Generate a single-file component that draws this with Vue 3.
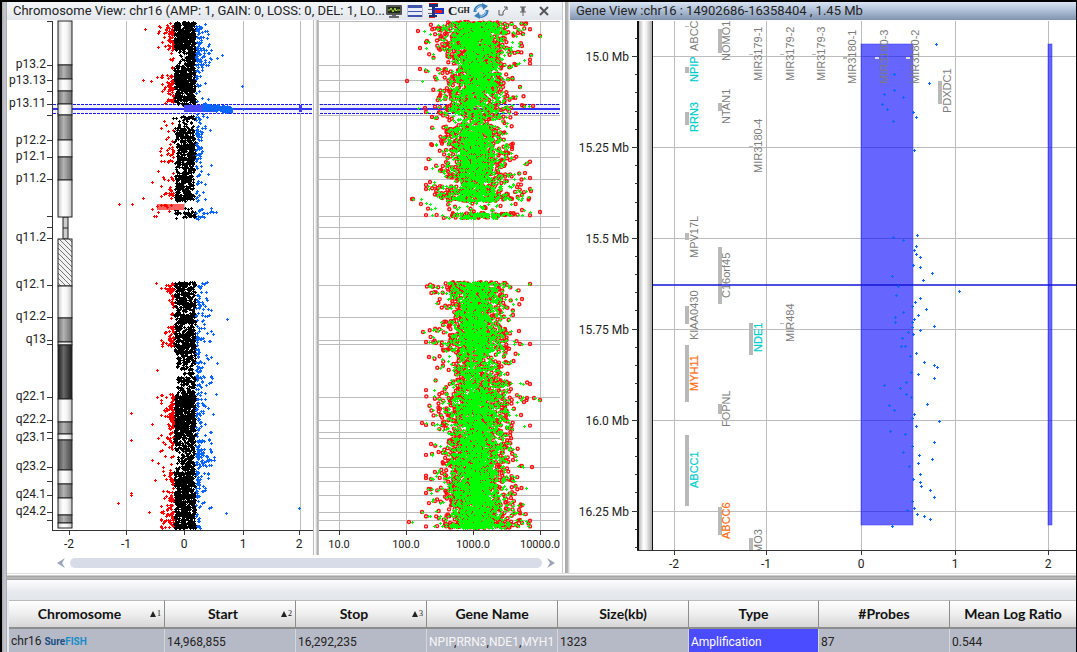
<script setup>
// Small seeded generator so the scatter looks the same on every load.
function seeded(seed) {
  let s = seed
  return () => {
    s = (s * 1664525 + 1013904223) % 4294967296
    return s / 4294967296
  }
}

const plus = (x, y) => {
  const a = Math.round(x)
  const b = Math.round(y)
  return `M${a - 1} ${b}h3v1h-3zM${a} ${b - 1}h1v3h-1z`
}
const ring = (x, y) =>
  `M${(x - 1.5).toFixed(1)} ${y.toFixed(1)}a1.5 1.5 0 1 0 3 0a1.5 1.5 0 1 0 -3 0`

/* ---- chromosome ideogram ---- */
const ticks = [21, 65, 80, 91, 104, 115, 140, 157, 179, 216, 227, 238, 285, 317, 340, 344, 397, 420, 432, 438, 467, 481, 495, 512, 520]
const bandLabels = [
  ['p13.2', 68], ['p13.13', 84], ['p13.11', 107], ['p12.2', 144], ['p12.1', 160], ['p11.2', 182],
  ['q11.2', 241], ['q12.1', 288], ['q12.2', 320], ['q13', 343], ['q22.1', 400], ['q22.2', 423],
  ['q23.1', 441], ['q23.2', 470], ['q24.1', 498], ['q24.2', 515]
]
const bands = [
  [21, 65, 'light'], [65, 79, 'mid'], [79, 91, 'light'], [91, 104, 'mid'], [104, 115, 'light'],
  [115, 140, 'mid'], [140, 157, 'light'], [157, 180, 'mid'], [180, 217, 'light'],
  [239, 286, 'hatch'], [286, 318, 'light'], [318, 342, 'mid'], [342, 345, 'light'],
  [345, 399, 'dark'], [399, 422, 'light'], [422, 434, 'mid'], [434, 440, 'light'],
  [440, 470, 'deep'], [470, 484, 'light'], [484, 498, 'mid'], [498, 515, 'light'],
  [515, 523, 'mid'], [523, 528, 'light']
]
const ratioAxis = [[69, '-2'], [126, '-1'], [184, '0'], [243, '1'], [299, '2']]

/* ---- log ratio scatter: y0, y1, x0, x1, points per square pixel ---- */
const r1 = seeded(16)
const blackZones = [
  [22, 50, 174, 195, 0.62], [50, 72, 176, 195, 0.18], [50, 66, 186, 195, 0.4], [68, 100, 174, 195, 0.56],
  [100, 105, 175, 195, 0.3], [116, 119, 181, 195, 0.5], [119, 127, 178, 195, 0.12], [127, 145, 174, 195, 0.33],
  [145, 160, 177, 195, 0.54], [160, 172, 175, 195, 0.28], [172, 190, 175, 194, 0.38], [190, 201, 174, 194, 0.45],
  [208, 218, 174, 196, 0.12], [213, 216, 184, 195, 0.4], [282, 290, 174, 195, 0.56], [290, 314, 175, 195, 0.34],
  [314, 323, 174, 195, 0.56], [323, 332, 175, 195, 0.28], [332, 352, 174, 195, 0.52], [352, 366, 177, 195, 0.29],
  [366, 386, 177, 195, 0.15], [376, 382, 177, 195, 0.15], [386, 396, 177, 195, 0.26], [395, 426, 174, 195, 0.64],
  [426, 445, 174, 195, 0.4], [445, 474, 181, 194, 0.4], [445, 474, 175, 181, 0.1], [472, 485, 174, 195, 0.5],
  [485, 515, 175, 195, 0.52], [515, 528, 174, 195, 0.38], [523, 528, 174, 195, 0.5]
]
let black = ''
for (const [y0, y1, x0, x1, d] of blackZones) {
  const n = (y1 - y0) * (x1 - x0) * d
  for (let i = 0; i < n; i++) black += plus(x0 + r1() * (x1 - x0), y0 + r1() * (y1 - y0))
}
black += plus(173, 118) + plus(176, 118) + plus(176, 218)

const tail = (zones, edge, dir) => {
  let d = ''
  for (const [y0, y1, count, spread] of zones) {
    for (let i = 0; i < count; i++) {
      const off = Math.min(-Math.log(1 - r1()) * spread, spread * 3)
      d += plus(edge + dir * off, y0 + r1() * (y1 - y0))
    }
  }
  return d
}
const list = (pts) => pts.map(([x, y]) => plus(x, y)).join('')
const red =
  tail([
    [22, 48, 46, 5], [48, 74, 10, 2], [74, 92, 38, 4], [92, 104, 14, 4], [118, 145, 10, 4],
    [145, 164, 20, 4], [170, 186, 9, 5], [186, 200, 18, 4], [203, 212, 10, 8], [282, 292, 22, 4],
    [292, 326, 18, 2], [326, 348, 42, 4], [394, 428, 66, 4], [428, 448, 24, 5], [448, 472, 10, 5],
    [472, 496, 26, 4], [496, 528, 66, 4]
  ], 173, -1) +
  list([[145, 29], [119, 204], [132, 204], [143, 198], [152, 182], [143, 80], [151, 81], [157, 77], [160, 151],
    [154, 216], [156, 216], [152, 209], [156, 283], [157, 370], [157, 397], [131, 413], [152, 424], [131, 440],
    [152, 460], [155, 480], [158, 463], [131, 493], [131, 495], [118, 503], [149, 512], [161, 519]])
const blue =
  tail([
    [22, 46, 30, 4], [46, 66, 56, 5], [66, 104, 24, 3], [113, 122, 10, 5], [122, 145, 28, 3],
    [145, 178, 30, 4], [178, 202, 16, 3], [208, 219, 18, 5], [282, 304, 24, 4], [304, 345, 46, 5],
    [345, 386, 54, 5], [386, 420, 40, 4], [420, 448, 26, 5], [448, 466, 60, 5], [466, 496, 40, 4],
    [496, 528, 18, 5]
  ], 196, 1) +
  list([[242, 86], [222, 55], [217, 58], [209, 44], [208, 99], [210, 130], [211, 165], [208, 174], [216, 212],
    [213, 212], [227, 319], [213, 334], [210, 341], [217, 363], [212, 378], [216, 394], [213, 414], [209, 440],
    [214, 457], [214, 460], [211, 507], [226, 513], [299, 508], [243, 109]])
let ampProbes = ''
for (let i = 0; i < 150; i++) {
  const x = 203 + Math.pow(r1(), 1.2) * 29
  ampProbes += plus(x, 107 + (x - 203) / 12 + (r1() - 0.5) * 6)
}

/* ---- signal intensity scatter ---- */
const r2 = seeded(99)
const gauss = () => Math.sqrt(-2 * Math.log(1 - r2())) * Math.cos(6.283 * r2())
const intensityAxis = [[339, '10.0'], [406, '100.0'], [473, '1000.0'], [540, '10000.0']]
const signalZones = [
  [22, 50, 360, 20], [50, 66, 140, 17], [66, 95, 280, 16], [95, 104, 60, 18], [104, 114, 75, 22],
  [114, 120, 26, 16], [119, 126, 18, 16], [126, 150, 230, 16], [150, 168, 160, 18], [168, 186, 140, 18],
  [186, 201, 160, 21], [203, 212, 12, 25], [213, 218, 55, 21], [282, 294, 120, 19], [294, 312, 140, 17],
  [312, 326, 120, 15], [326, 352, 280, 17], [352, 382, 160, 15], [382, 396, 90, 17], [394, 430, 360, 19],
  [430, 446, 150, 17], [446, 470, 240, 18], [470, 500, 340, 17], [500, 528, 310, 19], [523, 528, 50, 20]
]
let rings = ''
let greens = ''
const probe = (x, y, dx) => {
  rings += ring(x, y)
  greens += plus(x + dx, y)
}
for (const [y0, y1, n, sd] of signalZones) {
  for (let i = 0; i < n; i++) {
    const off = gauss() * sd
    const x = 476 + Math.max(-50, Math.min(54, off))
    probe(x, y0 + r2() * (y1 - y0), -gauss() * 3 - off * 0.08)
    if (i % 10 < 9) greens += plus(476 + gauss() * sd * 0.6, y0 + r2() * (y1 - y0))
  }
}
const signalOutliers = [
  [418, 31, 6], [420, 48, 6], [427, 41, -1], [420, 69, 5], [426, 71, 2], [407, 81, 15], [540, 36, 0], [531, 55, 0],
  [525, 24, 0], [523, 34, 0], [522, 46, -3], [518, 52, -1], [520, 87, 0], [516, 65, -4], [533, 106, -4],
  [524, 106, 0], [425, 108, -7], [432, 117, 4], [432, 145, 4], [430, 182, 4], [412, 199, 9], [421, 204, 9],
  [413, 199, 0], [525, 173, -6], [531, 191, -5], [530, 189, 1], [540, 212, -10], [522, 210, 2], [433, 286, -4],
  [522, 299, -6], [513, 315, -3], [423, 332, 1], [519, 331, -8], [520, 344, -6], [530, 344, -8], [436, 343, -3],
  [429, 357, 4], [506, 363, 0], [530, 384, -7], [534, 398, 1], [540, 400, -1], [527, 398, -5], [524, 402, -7],
  [422, 423, 4], [433, 424, 4], [521, 415, -5], [431, 444, 4], [513, 460, 3], [521, 466, 1], [532, 467, -9],
  [426, 478, 5], [431, 479, 2], [512, 478, -4], [422, 512, 0], [409, 522, 3], [435, 501, -3], [519, 510, -6],
  [520, 520, 1], [522, 523, 0], [518, 526, 0]
]
for (const [x, y, dx] of signalOutliers) probe(x, y, dx)

/* ---- gene view ---- */
const geneMajor = [[56, '15.0 Mb'], [147, '15.25 Mb'], [238, '15.5 Mb'], [329, '15.75 Mb'], [420, '16.0 Mb'], [511, '16.25 Mb']]
const geneMinor = [38, 74, 92, 111, 129, 165, 183, 202, 220, 256, 274, 292, 310, 347, 365, 383, 401, 438, 456, 474, 492, 529, 547]
const geneAxis = [[674, '-2'], [766, '-1'], [861, '0'], [955, '1'], [1048, '2']]
// name, label baseline x, label bottom y, bar x, bar top, bar height, tone
const genes = [
  ['ABCC', 698, 51, 685, 26, 1, ''], ['NPIP', 698, 82, 685, 67, 6, 'cyan'], ['RRN3', 698, 132, 685, 112, 13, 'cyan'],
  ['MPV17L', 698, 258, 685, 233, 7, ''], ['KIAA0430', 698, 340, 685, 306, 18, ''], ['MYH11', 698, 391, 685, 345, 57, 'orange'],
  ['ABCC1', 698, 488, 685, 435, 71, 'cyan'], ['NOMO1', 730, 61, 718, 29, 24, ''], ['NTAN1', 730, 124, 718, 103, 8, ''],
  ['C16orf45', 730, 298, 718, 247, 57, ''], ['FOPNL', 730, 427, 718, 404, 10, ''], ['ABCC6', 730, 539, 718, 507, 28, 'orange'],
  ['MIR3179-1', 762, 81, 749, 54, 1, ''], ['MIR3180-4', 762, 173, 749, 146, 1, ''], ['NDE1', 762, 352, 749, 323, 32, 'cyan'],
  ['MO3', 762, 553, 749, 538, 12, ''], ['MIR3179-2', 794, 81, 780, 54, 1, ''], ['MIR484', 794, 342, 780, 323, 1, ''],
  ['MIR3179-3', 825, 81, 812, 54, 1, ''], ['MIR3180-1', 856, 84, 843, 57, 2, ''], ['MIR3180-3', 888, 84, 875, 57, 2, 'over'],
  ['MIR3180-2', 919, 84, 906, 57, 2, ''], ['PDXDC1', 951, 113, 938, 81, 23, '']
]
const geneDots = list([
  [936, 44], [894, 74], [929, 83], [894, 90], [884, 94], [903, 97], [882, 104], [887, 109], [913, 112], [916, 117],
  [893, 121], [914, 150], [917, 235], [893, 237], [903, 240], [916, 246], [914, 250], [916, 254], [920, 257],
  [913, 265], [920, 267], [932, 273], [892, 276], [923, 280], [898, 286], [959, 291], [896, 295], [920, 298],
  [915, 302], [912, 306], [926, 309], [903, 312], [918, 315], [895, 317], [914, 319], [912, 322], [895, 322],
  [934, 326], [912, 327], [920, 330], [908, 332], [913, 334], [902, 338], [901, 346], [905, 346], [916, 353],
  [910, 356], [924, 362], [934, 365], [937, 367], [911, 372], [918, 374], [934, 378], [906, 382], [884, 385],
  [900, 388], [906, 394], [911, 397], [927, 404], [889, 405], [894, 410], [914, 414], [912, 418], [939, 421],
  [916, 426], [890, 431], [905, 434], [934, 442], [912, 446], [903, 452], [919, 455], [932, 459], [918, 463],
  [909, 466], [920, 474], [913, 479], [920, 482], [921, 486], [930, 490], [934, 497], [912, 501], [914, 508],
  [907, 510], [917, 514], [924, 516], [930, 519], [892, 526]
])

const columns = [
  { name: 'Chromosome', sort: '1', width: 156 }, { name: 'Start', sort: '2', width: 131 },
  { name: 'Stop', sort: '3', width: 131 }, { name: 'Gene Name', width: 131 },
  { name: 'Size(kb)', width: 131 }, { name: 'Type', width: 130 },
  { name: '#Probes', width: 131 }, { name: 'Mean Log Ratio', width: 127 }
]
</script>

<template>
  <main class="window">
    <div class="views">
      <section class="pane">
        <header class="bar">
          <h2>Chromosome View: chr16 (AMP: 1, GAIN: 0, LOSS: 0, DEL: 1, LO...</h2>
          <div class="tools">
            <button type="button" aria-label="Signal monitor">
              <svg viewBox="0 0 18 16" width="18" height="16">
                <rect x="1" y="2" width="16" height="10" rx="1" fill="#555" />
                <rect x="3" y="4" width="12" height="6" fill="#1d2b12" />
                <path d="M3 7h2l1-2 2 4 2-4 1 3 1-1h3" fill="none" stroke="#b7e04a" />
                <path d="M7 12h4v1h3v2H4v-2h3z" fill="#666" />
              </svg>
            </button>
            <button type="button" aria-label="Table layout">
              <svg viewBox="0 0 18 16" width="18" height="16">
                <rect x="1" y="2" width="16" height="12" fill="#e9edf8" />
                <path d="M1 2h16v3H1zM1 8h16v1H1zM1 12h16v2H1z" fill="#3f55ad" />
                <path d="M1 2h1v12H1zM16 2h1v12h-1z" fill="#b4bedd" />
              </svg>
            </button>
            <button type="button" aria-label="Interval bars">
              <svg viewBox="0 0 18 16" width="18" height="16">
                <path d="M2 0h9v1H2zM2 14h6v1H2z" fill="#e02020" />
                <path d="M2 1h9v3H2zM2 12h8v2H2z" fill="#1c2c78" />
                <path d="M1 6h5v1H1zM1 10h5v1H1z" fill="#667" />
                <rect x="5" y="4" width="3" height="8" fill="#20307c" />
                <rect x="7" y="5" width="10" height="6" fill="#1a35c8" />
                <path d="M8 7h7v3H8z" fill="#ee1616" />
              </svg>
            </button>
            <button type="button" class="cgh"><b>C</b>GH</button>
            <button type="button" aria-label="Refresh">
              <svg viewBox="0 0 16 16" width="16" height="16">
                <g fill="none" stroke="#3a7fb8" stroke-width="3">
                  <path d="M2 9A6 6 0 0 1 10 3" /><path d="M14 7A6 6 0 0 1 6 13" />
                </g>
                <path d="M9 0l6 3-5 4zM7 16l-6-3 5-4z" fill="#3a7fb8" />
                <path d="M3 8A5 5 0 0 1 9 3M13 8A5 5 0 0 1 7 13" fill="none" stroke="#a9d6f2" />
              </svg>
            </button>
            <button type="button" aria-label="Detach">
              <svg viewBox="0 0 12 16" width="12" height="16" fill="none" stroke="#555">
                <path d="M2 7v5h4v-3M6 9l4-5M7 4h3v3" />
              </svg>
            </button>
            <button type="button" aria-label="Pin">
              <svg viewBox="0 0 12 16" width="12" height="16" fill="none" stroke="#666">
                <path d="M3 4h6M3 9h6M6 9v4" /><path d="M6 4v5" stroke-width="3" />
              </svg>
            </button>
            <button type="button" aria-label="Close">
              <svg viewBox="0 0 14 16" width="14" height="16" fill="none" stroke="#555" stroke-width="2">
                <path d="M3 4l8 8M11 4l-8 8" />
              </svg>
            </button>
          </div>
        </header>

        <div class="plots">
          <svg class="plot" viewBox="7 20 307 535" role="img" aria-label="Chromosome 16 log ratios">
            <defs>
              <linearGradient id="light"><stop offset="0" stop-color="#c9c9c9" /><stop offset=".35" stop-color="#fff" /><stop offset=".65" stop-color="#f4f4f4" /><stop offset="1" stop-color="#c0c0c0" /></linearGradient>
              <linearGradient id="mid"><stop offset="0" stop-color="#6e6e6e" /><stop offset=".4" stop-color="#b4b4b4" /><stop offset="1" stop-color="#6a6a6a" /></linearGradient>
              <linearGradient id="deep"><stop offset="0" stop-color="#4d4d4d" /><stop offset=".4" stop-color="#8c8c8c" /><stop offset="1" stop-color="#484848" /></linearGradient>
              <linearGradient id="dark"><stop offset="0" stop-color="#1c1c1c" /><stop offset=".4" stop-color="#696969" /><stop offset="1" stop-color="#1a1a1a" /></linearGradient>
              <pattern id="hatch" width="5" height="5" patternUnits="userSpaceOnUse">
                <rect width="5" height="5" fill="#f2f2f2" /><path d="M-1 -1l7 7M-1 4l2 2M4 -1l2 2" stroke="#555" stroke-width=".8" />
              </pattern>
            </defs>
            <path class="grid" d="M126 21v509M184 21v509M243 21v509M300 21v509M313 20v535" />
            <rect x="53" y="104" width="259" height="9" fill="#f1f1ff" />
            <path class="select" d="M53 109H312" />
            <path class="edge" d="M53 104H312M53 113H312" />
            <path :d="black" fill="#000" />
            <rect x="157" y="204" width="27" height="6" fill="#ff6060" />
            <path :d="red" fill="#f00" />
            <path :d="blue" fill="#0a66ff" />
            <rect x="184" y="105" width="33" height="7" fill="#4a4aff" />
            <rect x="299" y="105" width="3" height="7" fill="#4040f0" />
            <path :d="ampProbes" fill="#0a66ff" />
            <rect x="63" y="217" width="5" height="22" fill="#ccc" stroke="#222" />
            <path d="M63 228h5" stroke="#222" />
            <rect v-for="b in bands" :key="b[0]" x="58" :y="b[0]" width="14" :height="b[1] - b[0]" :fill="`url(#${b[2]})`" stroke="#222" />
            <path class="axis" d="M52 21V530H313" />
            <path v-for="t in ticks" :key="t" class="axis" :d="`M47 ${t}h5`" />
            <text v-for="l in bandLabels" :key="l[0]" class="label" x="46" :y="l[1]" text-anchor="end">{{ l[0] }}</text>
            <g v-for="a in ratioAxis" :key="a[1]">
              <path class="axis" :d="`M${a[0]} 530v5`" />
              <text class="label" :x="a[0]" y="548" text-anchor="middle">{{ a[1] }}</text>
            </g>
          </svg>
          <div class="rail"></div>
          <svg class="plot" viewBox="319 20 243 535" role="img" aria-label="Signal intensities">
            <path class="grid" d="M339 21v509M406 21v509M473 21v509M540 21v509" />
            <path v-for="t in ticks" :key="t" class="grid" :d="`M319 ${t}h241`" />
            <rect x="320" y="105" width="240" height="8" fill="#eeeeff" />
            <path class="select" d="M320 109H560" />
            <path class="edge" d="M320 104H560M320 113H560" />
            <path :d="rings" fill="none" stroke="#ff1010" stroke-width="1.4" />
            <path :d="greens" fill="#0f0" />
            <path class="axis" d="M319 530H560" />
            <g v-for="a in intensityAxis" :key="a[1]">
              <path class="axis" :d="`M${a[0]} 530v5`" />
              <text class="label small" :x="a[0]" y="548" text-anchor="middle">{{ a[1] }}</text>
            </g>
          </svg>
        </div>

        <div class="scroll">
          <button type="button" aria-label="Scroll left"><svg viewBox="0 0 8 10" width="8" height="10"><path d="M8 0L0 5l8 5-3-5z" fill="#9aa4b6" /></svg></button>
          <div class="thumb"></div>
          <button type="button" aria-label="Scroll right"><svg viewBox="0 0 8 10" width="8" height="10"><path d="M0 0l8 5-8 5 3-5z" fill="#9aa4b6" /></svg></button>
        </div>
      </section>

      <div class="splitter"></div>

      <section class="pane">
        <header class="bar active">
          <h2>Gene View :chr16 : 14902686-16358404 , 1.45 Mb</h2>
        </header>
        <svg class="plot" viewBox="570 20 506 553" role="img" aria-label="Genes on chromosome 16">
          <defs>
            <linearGradient id="tube"><stop offset="0" stop-color="#aaa" /><stop offset=".4" stop-color="#fff" /><stop offset=".6" stop-color="#f0f0f0" /><stop offset="1" stop-color="#aaa" /></linearGradient>
            <clipPath id="area"><rect x="653" y="21" width="423" height="529" /></clipPath>
          </defs>
          <path v-for="a in geneAxis" :key="a[1]" class="grid" :d="`M${a[0]} 21v529`" />
          <path v-for="m in geneMajor" :key="m[0]" class="grid" :d="`M653 ${m[0]}h423`" />
          <g clip-path="url(#area)">
            <rect v-for="g in genes" :key="g[0]" :x="g[3]" :y="g[4]" width="4" :height="g[5]" fill="#b9b9b9" />
            <rect x="861" y="44" width="52" height="481" class="amp" />
            <rect x="1048" y="44" width="4" height="481" class="amp" />
            <rect x="875" y="57" width="4" height="2" fill="#deded0" />
            <rect x="906" y="57" width="4" height="2" fill="#deded0" />
            <text v-for="g in genes" :key="g[0]" :class="['gene', g[6]]" :transform="`translate(${g[1]} ${g[2]}) rotate(-90)`">{{ g[0] }}</text>
          </g>
          <path d="M653 285H1076" stroke="#1414d8" stroke-width="1.3" />
          <path :d="geneDots" fill="#0a66ff" />
          <rect x="638" y="21" width="14" height="529" fill="url(#tube)" />
          <rect x="637" y="21" width="2" height="529" fill="#111" />
          <rect x="652" y="21" width="1" height="529" fill="#111" />
          <path class="axis" d="M637 550H1076" />
          <path v-for="m in geneMinor" :key="m" class="axis" :d="`M635 ${m}h3`" />
          <g v-for="m in geneMajor" :key="m[1]">
            <path class="axis" :d="`M632 ${m[0]}h6`" />
            <text class="label" x="629" :y="m[0] + 5" text-anchor="end">{{ m[1] }}</text>
          </g>
          <g v-for="a in geneAxis" :key="a[1]">
            <path class="axis" :d="`M${a[0]} 550v5`" />
            <text class="label" :x="a[0]" y="568" text-anchor="middle">{{ a[1] }}</text>
          </g>
        </svg>
      </section>
    </div>

    <div class="divider"></div>
    <div class="strip"></div>
    <table>
      <colgroup><col v-for="c in columns" :key="c.name" :width="c.width" /></colgroup>
      <thead>
        <tr>
          <th v-for="c in columns" :key="c.name" scope="col">
            <div class="head">
              <span>{{ c.name }}</span>
              <small v-if="c.sort"><svg viewBox="0 0 6 6" width="6" height="6"><path d="M3 0l3 6H0z" fill="#222" /></svg>{{ c.sort }}</small>
            </div>
          </th>
        </tr>
      </thead>
      <tbody>
        <tr>
          <td>chr16 <a href="#" class="fish">Sure<span>FISH</span></a></td>
          <td>14,968,855</td>
          <td>16,292,235</td>
          <td><i>NPIP</i>,<i>RRN3</i>,<i>NDE1</i>,<i>MYH1</i></td>
          <td>1323</td>
          <td class="type">Amplification</td>
          <td>87</td>
          <td>0.544</td>
        </tr>
      </tbody>
    </table>
  </main>
</template>

<style>
html,
body {
  background: #000;
}
</style>

<style scoped>
.window {
  box-sizing: border-box;
  min-height: 100vh;
  padding-left: 5px;
  border: solid #000;
  border-width: 2px 1px 2px 2px;
  background: linear-gradient(90deg, #a9a9b1, #c9c9d3 3px, #a6a6ae 5px, #e6e9ee 5px);
  font-family: Roboto, "Open Sans", sans-serif;
  color: #222;
  overflow: hidden;
}
button {
  display: flex;
  align-items: center;
  padding: 0;
  border: 0;
  background: none;
}
.views {
  display: grid;
  grid-template-columns: 555fr 8px 506fr;
}
.pane {
  min-width: 0;
  background: #fff;
}
.bar {
  display: flex;
  justify-content: space-between;
  align-items: center;
  height: 18px;
  padding: 0 12px 0 6px;
  background: linear-gradient(#f4f6f9, #e3e7ed);
}
.active {
  background: linear-gradient(#d9e4f3, #a3b4cd 60%, #8193ae);
}
h2 {
  margin: 0;
  font-size: 13px;
  font-weight: 400;
  line-height: 16px;
  white-space: nowrap;
}
.tools {
  display: flex;
  align-items: center;
  gap: 3px;
}
.tools button:nth-child(n + 6) {
  margin-left: 5px;
}
.cgh {
  font: bold 8px/16px "Liberation Serif", serif;
  color: #111;
}
.cgh b {
  font-size: 13px;
}
.plots {
  display: grid;
  grid-template-columns: 307fr 5px 243fr;
}
.plot {
  display: block;
  width: 100%;
  height: auto;
  background: #fff;
}
.rail {
  background: linear-gradient(90deg, #fff 1px, #e2e2e2 2px, #a2a2a2 4px, #ddd 5px);
}
.grid {
  stroke: #bcbcbc;
  stroke-width: 1;
  shape-rendering: crispEdges;
}
.axis {
  fill: none;
  stroke: #333;
  shape-rendering: crispEdges;
}
.select {
  stroke: #3333ff;
  stroke-width: 2;
}
.edge {
  stroke: #1a1ae6;
  stroke-dasharray: 3 1;
  shape-rendering: crispEdges;
}
.label {
  font-size: 12px;
  fill: #222;
}
.small {
  font-size: 11px;
}
.amp {
  fill: #00f;
  fill-opacity: 0.6;
  stroke: #3a3af0;
  stroke-opacity: 0.5;
}
.gene {
  font: 11px "Liberation Sans", Arial, sans-serif;
  fill: #7c7c7c;
}
.cyan {
  fill: #00cccc;
  stroke: #00cccc;
  stroke-width: 0.2;
}
.orange {
  fill: #ff6a10;
  stroke: #ff6a10;
  stroke-width: 0.2;
}
.scroll {
  display: flex;
  align-items: center;
  gap: 5px;
  height: 18px;
  padding: 0 7px 2px 50px;
  box-sizing: border-box;
}
.thumb {
  flex: 1;
  height: 10px;
  border-radius: 5px;
  background: #d7dce8;
}
.splitter {
  background: linear-gradient(90deg, #c8c8c8 1px, #fff 1px, #fff 3px, #a6a6a6 3px, #b6b6b6 6px, #eee 7px);
}
.divider {
  height: 7px;
  background: linear-gradient(#ddd 1px, #fff 1px, #fff 2px, #999 3px, #c2c2c2 5px, #999 7px);
}
.strip {
  height: 20px;
  background: linear-gradient(#fdfdfe, #e6e9ee 60%, #e3e6eb);
}
table {
  width: 100%;
  padding-left: 2px;
  border-collapse: separate;
  border-spacing: 0;
  table-layout: fixed;
}
th {
  height: 28px;
  padding: 0;
  box-sizing: border-box;
  border: solid #8d8d8d;
  border-width: 1px 1px 2px 0;
  border-top-color: #bbb;
  background: linear-gradient(#fff, #eee 50%, #d6d6d6);
  font: bold 14px/26px Lato, "Open Sans", sans-serif;
  color: #111;
}
.head {
  display: flex;
  align-items: center;
}
.head span {
  flex: 1;
  white-space: nowrap;
}
.head small {
  display: flex;
  align-items: center;
  gap: 1px;
  padding-right: 3px;
  font: 8px/8px "Liberation Serif", serif;
}
td {
  height: 22px;
  padding: 2px 0 0 2px;
  box-sizing: border-box;
  border-right: 1px solid #d3d6dd;
  background: #b6bac6;
  font-size: 12px;
  line-height: 20px;
  white-space: nowrap;
  overflow: hidden;
}
td i {
  font-style: normal;
  color: #f6f6f6;
}
.type {
  background: #4b4bff;
  color: #fff;
}
.fish {
  font-size: 10px;
  font-weight: 700;
  color: #1c4f82;
  text-decoration: none;
}
.fish span {
  color: #1a8cc6;
}
</style>
